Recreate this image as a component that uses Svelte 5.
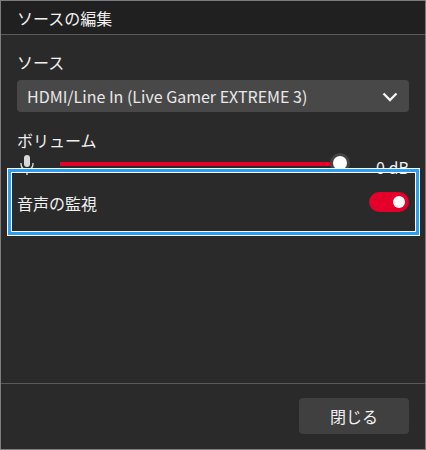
<script lang="ts">
  let monitoring = $state(true);
  let volume = $state(100);
</script>

<div class="dialog">
  <header class="title">ソースの編集</header>

  <div class="body">
    <section class="field">
      <div class="label">ソース</div>
      <div class="select">
        <span>HDMI/Line In (Live Gamer EXTREME 3)</span>
        <svg class="chevron" width="16" height="10" viewBox="0 0 16 10" fill="none">
          <path d="M1.5 1.5 8 8l6.5-6.5" stroke="#f2f2f2" stroke-width="2.4" />
        </svg>
      </div>
    </section>

    <section class="field volume">
      <div class="label">ボリューム</div>
      <div class="slider-row">
        <svg class="mic" width="14" height="20" viewBox="0 0 14 20" fill="none">
          <rect x="4" y="0" width="6" height="12" rx="3" fill="#d8d8d8" />
          <path d="M1 8v1a6 6 0 0 0 12 0V8M7 15v5" stroke="#d8d8d8" stroke-width="1.4" />
        </svg>
        <div class="track">
          <div class="fill" style="width: {volume}%"></div>
          <div class="thumb" style="left: {volume}%"></div>
        </div>
        <span class="db">0 dB</span>
      </div>
    </section>

    <div class="monitor">
      <span class="monitor-label">音声の監視</span>
      <button class="toggle" class:on={monitoring} aria-label="音声の監視" onclick={() => (monitoring = !monitoring)}>
        <span class="knob"></span>
      </button>
    </div>
  </div>

  <footer class="footer">
    <button class="close">閉じる</button>
  </footer>

  <div class="highlight"></div>
</div>

<style>
  :global(body) {
    margin: 0;
    background: #2a2a2a;
  }

  .dialog {
    position: relative;
    box-sizing: border-box;
    width: 426px;
    height: 450px;
    display: flex;
    flex-direction: column;
    overflow: hidden;
    background: #2a2a2a;
    color: #f0f0f0;
    border: 1px solid #7d7d7d;
    font-family: "Noto Sans CJK JP", "Noto Sans", sans-serif;
    font-size: 16px;
  }

  .title {
    box-sizing: border-box;
    height: 34px;
    padding: 0 16px;
    display: flex;
    align-items: center;
    background: #202020;
    border-bottom: 1px solid #5a5a5a;
    flex: none;
  }

  .body {
    flex: 1;
    padding: 16px 16px 0;
    display: flex;
    flex-direction: column;
  }

  .label {
    line-height: 22px;
    height: 22px;
  }

  .select {
    box-sizing: border-box;
    height: 32px;
    margin-top: 7px;
    padding: 0 10px;
    display: flex;
    align-items: center;
    justify-content: space-between;
    background: #484848;
    border-radius: 4px;
    color: #e8e8e8;
  }

  .chevron {
    margin-right: 1px;
    margin-top: 2px;
  }

  .volume {
    margin-top: 17px;
  }

  .slider-row {
    height: 20px;
    margin-top: 4px;
    display: flex;
    align-items: flex-start;
  }

  .mic {
    margin-left: 3px;
    flex: none;
  }

  .track {
    position: relative;
    width: 280px;
    height: 4px;
    margin: 7px 0 0 26px;
    background: #555;
  }

  .fill {
    height: 100%;
    background: #e4002b;
  }

  .thumb {
    position: absolute;
    top: 1px;
    width: 14px;
    height: 14px;
    border-radius: 50%;
    background: #fff;
    box-shadow: 0 0 0 3px #444;
    transform: translate(-50%, -50%);
  }

  .db {
    margin-left: auto;
    line-height: 20px;
    padding-top: 2px;
  }

  .monitor {
    height: 22px;
    margin-top: 16px;
    display: flex;
    align-items: center;
    justify-content: space-between;
  }

  .monitor-label {
    margin-top: 2px;
  }

  .toggle {
    width: 40px;
    height: 20px;
    padding: 0 4px;
    border: 0;
    border-radius: 10px;
    background: #666;
    display: flex;
    align-items: center;
  }

  .toggle.on {
    justify-content: flex-end;
    background: #e4002b;
  }

  .knob {
    width: 12px;
    height: 12px;
    border-radius: 50%;
    background: #fff;
  }

  .footer {
    box-sizing: border-box;
    height: 66px;
    flex: none;
    padding: 14px 16px 0;
    display: flex;
    justify-content: flex-end;
    align-items: flex-start;
    border-top: 1px solid #5a5a5a;
  }

  .close {
    width: 110px;
    height: 36px;
    border: 0;
    border-radius: 4px;
    background: #404040;
    color: #f0f0f0;
    font: inherit;
  }

  /* annotation frame sitting over the monitor row */
  .highlight {
    position: absolute;
    left: 6px;
    top: 167px;
    width: 413px;
    height: 68px;
    box-sizing: border-box;
    border: 1px solid #fff;
    box-shadow: inset 0 0 0 3px #2ba0f0, inset 0 0 0 4px #fff;
    pointer-events: none;
  }
</style>
